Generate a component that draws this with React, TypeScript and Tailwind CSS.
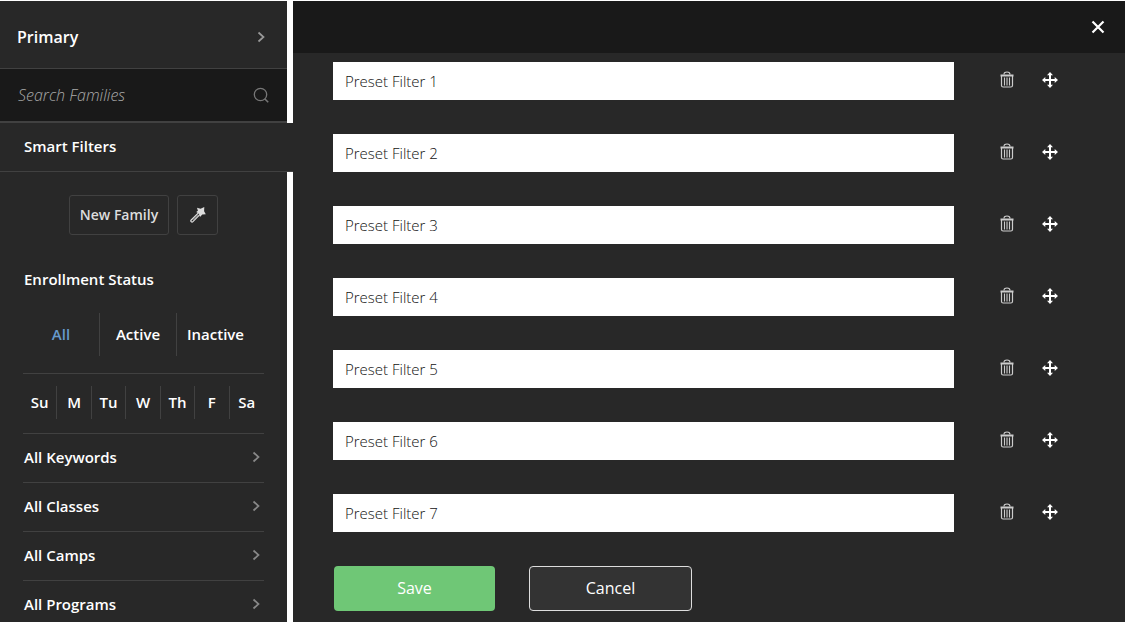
import { useState } from "react"

const statuses = ["All", "Active", "Inactive"]
const days = ["Su", "M", "Tu", "W", "Th", "F", "Sa"]
const groups = ["All Keywords", "All Classes", "All Camps", "All Programs"]
const presets = [1, 2, 3, 4, 5, 6, 7].map((n) => `Preset Filter ${n}`)

function ChevronIcon({ className }: { className?: string }) {
  return (
    <svg className={className} width="8" height="12" viewBox="0 0 8 12" fill="none" stroke="currentColor" strokeWidth="1.7" aria-hidden="true">
      <path d="M1.500 1.500 6.500 6 1.500 10.500" />
    </svg>
  )
}

function SearchIcon() {
  return (
    <svg width="16" height="16" viewBox="0 0 16 16" fill="none" stroke="currentColor" strokeWidth="1.3" aria-hidden="true">
      <circle cx="7.500" cy="7.500" r="6.200" />
      <path d="m11.700 11.700 3.500 3.500" strokeWidth="1.600" />
    </svg>
  )
}

function WandIcon() {
  return (
    <svg width="16" height="16" viewBox="0 0 16 16" fill="none" aria-hidden="true">
      <path d="M8.700 5.600 1.200 13a1.150 1.150 0 0 0 1.700 1.700l7.400-7.500" stroke="currentColor" strokeWidth="1.200" />
      <path d="m3 12.800 5-5" stroke="currentColor" strokeWidth=".5" />
      <path d="m7 .8 3.600 1L14.300 0l-.2 4.300 1.700 3-3.500.2-2.300 2.400-.9-3.100L6.200 5l1.700-1.300z" fill="currentColor" />
    </svg>
  )
}

function TrashIcon() {
  return (
    <svg width="14" height="17" viewBox="0 0 14 17" fill="none" stroke="currentColor" aria-hidden="true">
      <path d="M4 3.500C4 1.700 5.200 1 7 1s3 .7 3 2.500" strokeWidth="1.200" />
      <path d="M.5 4.500h13" strokeWidth="2" />
      <path d="M1.500 5v9.500c0 1 .6 1.500 1.600 1.500h7.800c1 0 1.600-.5 1.600-1.500V5" strokeWidth="1.200" />
      <path d="M4.500 6.500v8M7 6.500v8M9.500 6.500v8" strokeWidth="1.100" />
    </svg>
  )
}

function MoveIcon() {
  return (
    <svg width="16" height="16" viewBox="0 0 16 16" aria-hidden="true">
      <path d="M8 2v12M2 8h12" stroke="currentColor" strokeWidth="2" />
      <path d="M8 0l3 3.300H5zM8 16l-3-3.300h6zM0 8l3.300-3v6zM16 8l-3.300 3V5z" fill="currentColor" />
    </svg>
  )
}

function CloseIcon() {
  return (
    <svg width="14" height="14" viewBox="0 0 14 14" stroke="currentColor" strokeWidth="2.200" aria-hidden="true">
      <path d="m1.500 1.500 11 11M12.500 1.500l-11 11" />
    </svg>
  )
}

function Sidebar() {
  const [status, setStatus] = useState("All")

  return (
    <aside className="w-[287px] shrink-0 bg-[#282828] text-[15px] font-semibold text-white">
      <button className="flex h-[68px] w-full items-center justify-between border-b border-[#414141] pt-1 pr-[22px] pl-[17px] text-base">
        Primary
        <ChevronIcon className="text-[#999]" />
      </button>
      <label className="flex h-[54px] items-center border-b-2 border-[#414141] bg-[#191919] px-[18px] text-[#777]">
        <input
          className="min-w-0 flex-1 bg-transparent text-base font-light italic outline-none placeholder:text-[#aaa]"
          type="search"
          placeholder="Search Families"
          aria-label="Search Families"
        />
        <SearchIcon />
      </label>
      {/* active tab, runs into the panel */}
      <a href="#filters" className="relative z-10 -mr-[6px] flex h-[49px] items-center border-b border-[#414141] bg-[#282828] pb-0.5 pl-6">
        Smart Filters
      </a>

      <div className="px-[23px] pt-[23px]">
        <div className="flex justify-center gap-2">
          <button className="h-10 w-[100px] rounded-[3px] border border-[#414141] text-sm text-[#ddd]">New Family</button>
          <button className="flex h-10 w-[41px] items-center justify-center rounded-[3px] border border-[#414141] text-[#ddd]" aria-label="Bulk actions">
            <WandIcon />
          </button>
        </div>

        <h2 className="mt-8 pl-px leading-6">Enrollment Status</h2>
        <div className="mt-[22px] grid grid-cols-[77px_77px_77px] border-b border-[#414141] pb-[17px]">
          {statuses.map((s) => (
            <button
              key={s}
              onClick={() => setStatus(s)}
              className={`h-[43px] border-r border-[#414141] last:border-r-0 ${status === s ? "text-[#6699cc]" : ""}`}
            >
              {s}
            </button>
          ))}
        </div>
        <div className="grid grid-cols-7 border-b border-[#414141] pt-3 pb-[14px]">
          {days.map((d) => (
            <button key={d} className="h-[33px] border-r border-[#414141] last:border-r-0">{d}</button>
          ))}
        </div>
        {groups.map((g) => (
          <button key={g} className="flex h-[49px] w-full items-center justify-between border-b border-[#414141] pr-1 pb-0.5 pl-px">
            {g}
            <ChevronIcon className="text-[#888]" />
          </button>
        ))}
      </div>
    </aside>
  )
}

export default function App() {
  return (
    <div className="flex h-screen gap-[6px] overflow-hidden bg-white pt-px pr-[2px] font-['Open_Sans',sans-serif]">
      <Sidebar />
      <main className="min-w-0 flex-1 bg-[#282828] text-white">
        <header className="flex h-[52px] items-center justify-end bg-[#191919] pr-5">
          <button aria-label="Close">
            <CloseIcon />
          </button>
        </header>
        <form className="pt-[9px] pl-10" onSubmit={(e) => e.preventDefault()}>
          <ul className="flex flex-col gap-[34px] pr-[67px]">
            {presets.map((name) => (
              <li key={name} className="flex h-[38px] items-center">
                <input
                  className="h-full min-w-0 flex-1 bg-white px-3 text-[15px] font-light text-[#111] outline-none"
                  defaultValue={name}
                  aria-label={name}
                />
                <button type="button" className="ml-[46px] pb-1 text-[#ccc]" aria-label={`Delete ${name}`}>
                  <TrashIcon />
                </button>
                <button type="button" className="ml-7 cursor-move pb-0.5" aria-label={`Move ${name}`}>
                  <MoveIcon />
                </button>
              </li>
            ))}
          </ul>
          <div className="mt-[34px] flex gap-[34px] pl-px">
            <button type="submit" className="h-[45px] w-[161px] rounded-[4px] bg-[#6fc776] pb-0.5 text-base">Save</button>
            <button type="button" className="h-[45px] w-[163px] rounded-[4px] border border-[#ddd] bg-[#333] pb-0.5 text-base">Cancel</button>
          </div>
        </form>
      </main>
    </div>
  )
}
